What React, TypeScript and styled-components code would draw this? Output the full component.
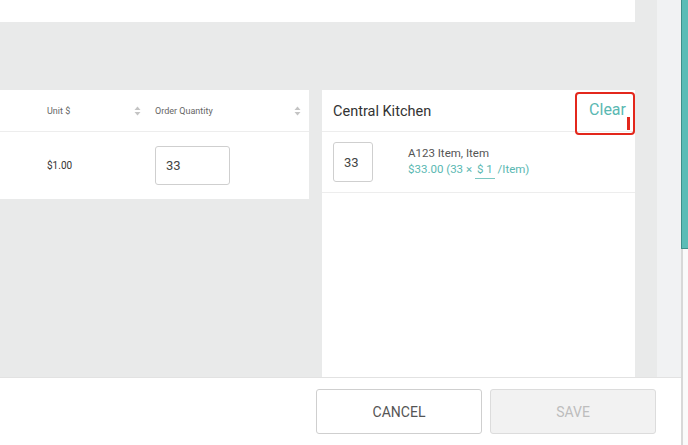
import { createGlobalStyle, styled } from "styled-components";

const GlobalStyle = createGlobalStyle`
  html, body {
    margin: 0;
    padding: 0;
    width: 688px;
    height: 445px;
    overflow: hidden;
    background: #ffffff;
    font-family: Roboto, "Liberation Sans", Arial, sans-serif;
  }
  * { box-sizing: border-box; }
`;

const Screen = styled.div`
  display: flex;
  width: 688px;
  height: 445px;
`;

const Modal = styled.div`
  display: flex;
  flex-direction: column;
  width: 681px;
  flex-shrink: 0;
  height: 445px;
`;

const Body = styled.div`
  display: flex;
  height: 377px;
`;

const Main = styled.div`
  flex: 1;
  display: flex;
  flex-direction: column;
  background: #e9eaea;
  padding-right: 22px;
`;

const TopPanel = styled.div`
  height: 22px;
  background: #ffffff;
  flex-shrink: 0;
`;

const Columns = styled.div`
  flex: 1;
  display: flex;
  gap: 13px;
  margin-top: 68px;
  align-items: flex-start;
`;

const TableCard = styled.div`
  width: 309px;
  background: #ffffff;
`;

const TableRow = styled.div<{ $header?: boolean }>`
  display: grid;
  grid-template-columns: 47px 108px 1fr;
  align-items: center;
  height: ${(p) => (p.$header ? "42px" : "67px")};
  border-bottom: ${(p) => (p.$header ? "1px solid #ededed" : "none")};
`;

const HeadCell = styled.div<{ $pad: number }>`
  display: flex;
  align-items: center;
  justify-content: space-between;
  padding-right: ${(p) => p.$pad}px;
  font-size: 9px;
  color: #666;
`;

const Cell = styled.div`
  font-size: 10px;
  color: #333;
`;

const QtyInput = styled.div<{ $w: number; $h: number }>`
  width: ${(p) => p.$w}px;
  height: ${(p) => p.$h}px;
  border: 1px solid #cfcfcf;
  border-radius: 3px;
  display: flex;
  align-items: center;
  padding-left: 10px;
  font-size: 13px;
  color: #444;
`;

const KitchenCard = styled.div`
  flex: 1;
  align-self: stretch;
  background: #ffffff;
  display: flex;
  flex-direction: column;
`;

const KitchenHeader = styled.div`
  position: relative;
  height: 42px;
  display: flex;
  align-items: center;
  justify-content: space-between;
  padding: 0 9px 0 11px;
  border-bottom: 1px solid #ededed;
`;

const KitchenTitle = styled.div`
  font-size: 14.5px;
  color: #333;
  margin-top: 1px;
`;

const ClearLink = styled.div`
  font-size: 16px;
  color: #5ab8b2;
  margin-top: -3px;
`;

const Highlight = styled.div`
  position: absolute;
  right: 0;
  top: 2px;
  width: 60px;
  height: 43px;
  border: 2px solid #e3271c;
  border-radius: 4px;
  &::after {
    content: "";
    position: absolute;
    right: 3px;
    top: 23px;
    width: 3px;
    height: 13px;
    background: #e3271c;
  }
`;

const ItemRow = styled.div`
  display: flex;
  align-items: center;
  height: 61px;
  padding-left: 11px;
  border-bottom: 1px solid #ededed;
`;

const ItemInfo = styled.div`
  margin-left: 35px;
  display: flex;
  flex-direction: column;
  gap: 2px;
  font-size: 11.5px;
`;

const ItemName = styled.div`
  color: #555;
`;

const ItemPrice = styled.div`
  color: #5ab8b2;
`;

const Underlined = styled.span`
  display: inline-block;
  border-bottom: 1px solid #7cc7c2;
  padding: 0 2px 2px;
`;

const ScrollStrip = styled.div`
  width: 24px;
  background: #f1f2f3;
`;

const Footer = styled.div`
  height: 68px;
  border-top: 1px solid #e2e2e2;
  background: #ffffff;
  display: flex;
  justify-content: flex-end;
  align-items: flex-start;
  gap: 8px;
  padding: 11px 25px 0 0;
`;

const Button = styled.button<{ $disabled?: boolean }>`
  width: 166px;
  height: 45px;
  border: 1px solid ${(p) => (p.$disabled ? "#dcdcdc" : "#cfcfcf")};
  border-radius: 3px;
  background: ${(p) => (p.$disabled ? "#f2f2f2" : "#ffffff")};
  color: ${(p) => (p.$disabled ? "#bdbdbd" : "#555")};
  font-family: Roboto, "Liberation Sans", Arial, sans-serif;
  font-size: 14px;
  text-transform: uppercase;
`;

const PageEdge = styled.div`
  width: 7px;
  flex-shrink: 0;
  display: flex;
  flex-direction: column;
  background: #fafafa;
  border-left: 2px solid #d8d8d8;
`;

const EdgeAccent = styled.div`
  height: 249px;
  margin-left: -2px;
  background: #5bbcb6;
  border-left: 1px solid #3e8f8a;
  border-bottom: 1px solid #3e8f8a;
`;

function SortIcon() {
  return (
    <svg width="7" height="10" viewBox="0 0 7 10" aria-hidden="true">
      <path d="M3.5 0.5 L6.5 4 H0.5 Z" fill="#c4c4c4" />
      <path d="M3.5 9.5 L6.5 6 H0.5 Z" fill="#c4c4c4" />
    </svg>
  );
}

export default function App() {
  return (
    <Screen>
      <GlobalStyle />
      <Modal>
        <Body>
          <Main>
            <TopPanel />
            <Columns>
              <TableCard>
                <TableRow $header>
                  <div />
                  <HeadCell $pad={14}>
                    <span>Unit $</span>
                    <SortIcon />
                  </HeadCell>
                  <HeadCell $pad={8}>
                    <span>Order Quantity</span>
                    <SortIcon />
                  </HeadCell>
                </TableRow>
                <TableRow>
                  <div />
                  <Cell>$1.00</Cell>
                  <QtyInput $w={75} $h={39}>33</QtyInput>
                </TableRow>
              </TableCard>
              <KitchenCard>
                <KitchenHeader>
                  <KitchenTitle>Central Kitchen</KitchenTitle>
                  <ClearLink>Clear</ClearLink>
                  <Highlight />
                </KitchenHeader>
                <ItemRow>
                  <QtyInput $w={40} $h={40}>33</QtyInput>
                  <ItemInfo>
                    <ItemName>A123 Item, Item</ItemName>
                    <ItemPrice>
                      $33.00 (33 × <Underlined>$ 1</Underlined> /Item)
                    </ItemPrice>
                  </ItemInfo>
                </ItemRow>
              </KitchenCard>
            </Columns>
          </Main>
          <ScrollStrip />
        </Body>
        <Footer>
          <Button>Cancel</Button>
          <Button $disabled>Save</Button>
        </Footer>
      </Modal>
      <PageEdge>
        <EdgeAccent />
      </PageEdge>
    </Screen>
  );
}
